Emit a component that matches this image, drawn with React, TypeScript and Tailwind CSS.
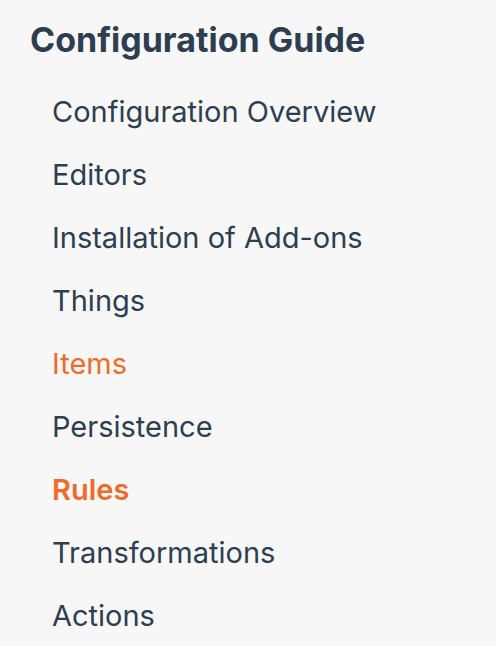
import React from "react";

const items: { label: string; state?: "hover" | "active" }[] = [
  { label: "Configuration Overview" },
  { label: "Editors" },
  { label: "Installation of Add-ons" },
  { label: "Things" },
  { label: "Items", state: "hover" },
  { label: "Persistence" },
  { label: "Rules", state: "active" },
  { label: "Transformations" },
  { label: "Actions" },
];

export default function App() {
  return (
    <div
      className="w-[496px] h-[646px] overflow-hidden bg-[#f7f7f7] text-[#2c3e50]"
      style={{ fontFamily: "Inter, 'Noto Sans', sans-serif" }}
    >
      <div className="pl-[30px] pt-[20px]">
        <h2 className="text-[34px] font-bold leading-[40px]">Configuration Guide</h2>
        <ul className="mt-[20px] pl-[22px]">
          {items.map((it) => (
            <li
              key={it.label}
              className={
                "text-[29px] leading-[63px] h-[63px] flex items-center " +
                (it.state === "active"
                  ? "font-semibold text-[#f06b2a]"
                  : it.state === "hover"
                  ? "text-[#f06b2a]"
                  : "")
              }
            >
              {it.label}
            </li>
          ))}
        </ul>
      </div>
    </div>
  );
}
